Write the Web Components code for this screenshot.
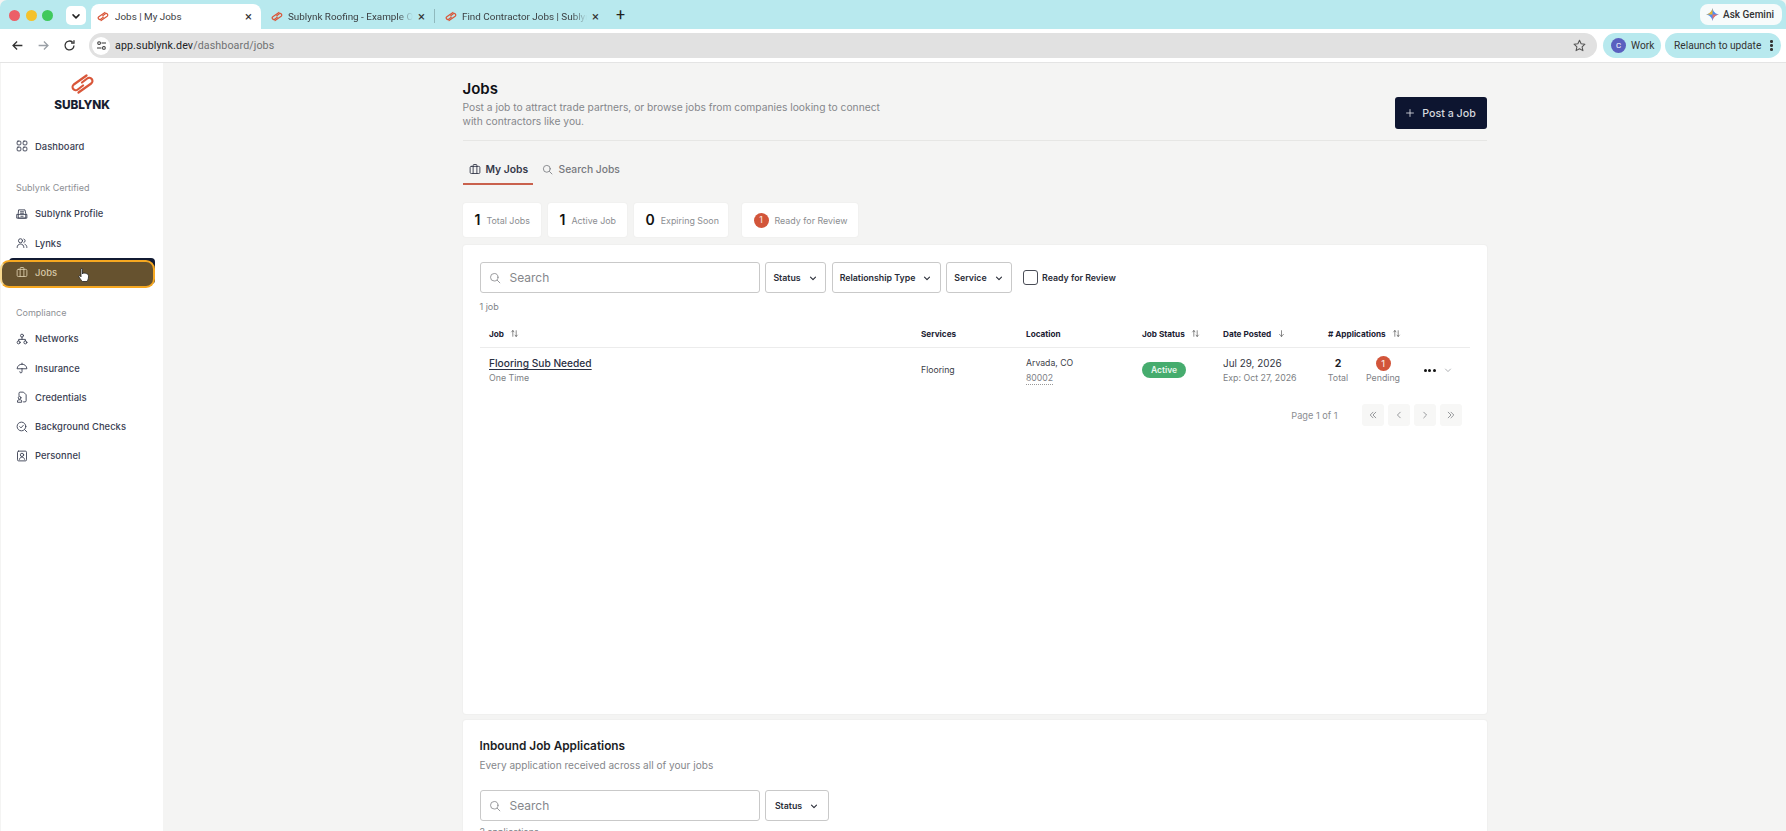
<!DOCTYPE html>
<html lang="en">
<head>
<meta charset="utf-8">
<title>Jobs | My Jobs</title>
<style>
html,body{margin:0;padding:0;height:831px;overflow:hidden;background:#f4f4f3;}
body{font-family:Inter,"Liberation Sans",sans-serif;color:#1c2233;}
</style>
</head>
<body>
<app-shell></app-shell>
<script>
const ICONS={
 grid:'<rect x="1.500" y="1.500" width="5" height="5" rx="1.200"/><rect x="9.500" y="1.500" width="5" height="5" rx="1.200"/><rect x="1.500" y="9.500" width="5" height="5" rx="1.200"/><rect x="9.500" y="9.500" width="5" height="5" rx="1.200"/>',
 store:'<path d="M4 2.500h8l1 5v6H3v-6z"/><path d="M1.500 8.500h13v5h-13z"/><path d="M6 5h4M6 7h4M6.500 11h3"/>',
 users:'<circle cx="6" cy="5" r="2.700"/><path d="M1.500 14c0-3 2-4.600 4.500-4.600s4.500 1.600 4.500 4.600"/><path d="M10.500 2.700a2.500 2.500 0 0 1 0 4.700M12 9.800c1.600.6 2.500 2 2.500 4.200"/>',
 case:'<rect x="1.500" y="4.500" width="13" height="9.500" rx="1.500"/><path d="M5.500 4.500V3a1 1 0 0 1 1-1h3a1 1 0 0 1 1 1v1.500M5.500 4.500V14M10.500 4.500V14"/>',
 net:'<circle cx="8" cy="3.500" r="2"/><circle cx="3.500" cy="12.500" r="2"/><circle cx="12.500" cy="12.500" r="2"/><path d="M8 5.500v3M3.500 10.500V8.500h9v2"/>',
 umb:'<path d="M1.500 8.500C2 5 4.500 3 8 3s6 2 6.500 5.500z"/><path d="M8 1.500V3M8 8.500V13a1.500 1.500 0 0 1-3 0"/>',
 cred:'<path d="M4 6V3a1.500 1.500 0 0 1 1.500-1.500H10l3.500 3.500v8a1.500 1.500 0 0 1-1.500 1.500h-2"/><circle cx="4.800" cy="9" r="1.800"/><path d="M2 14.500v-1.500a2 2 0 0 1 2-1.300h1.600a2 2 0 0 1 2 1.300v1.500z"/>',
 bg:'<circle cx="7.300" cy="7.300" r="5.800"/><path d="M11.500 11.500l3 3M5 7.500l1.700 1.700 3-3.400"/>',
 pers:'<rect x="2" y="1.500" width="12" height="13" rx="1.500"/><circle cx="8" cy="6.500" r="2.200"/><path d="M4.500 12.500c.4-2 1.800-3 3.500-3s3.100 1 3.500 3"/>',
 search:'<circle cx="7" cy="7" r="5"/><path d="M11 11l3.500 3.500"/>',
 chev:'<path d="M4 6.500l4 4 4-4"/>',
 sort:'<path d="M5 13V3M5 3L2.800 5.200M5 3l2.200 2.200M11 3v10M11 13l-2.200-2.200M11 13l2.200-2.200"/>',
 down:'<path d="M8 3v10M8 13l-3.500-3.500M8 13l3.500-3.500"/>',
 first:'<path d="M8 3.500L3.500 8 8 12.500M12.500 3.500L8 8l4.500 4.500"/>',
 prev:'<path d="M10 3.500L5.500 8l4.500 4.500"/>',
 next:'<path d="M6 3.500L10.500 8 6 12.500"/>',
 last:'<path d="M3.500 3.500L8 8l-4.500 4.500M8 3.500L12.500 8 8 12.500"/>',
 plus:'<path d="M8 2.500v11M2.500 8h11"/>'
};
class BaseEl extends HTMLElement{
 render(html){ if(!this.shadowRoot) this.attachShadow({mode:'open'}); this.shadowRoot.innerHTML=html; }
}
class UiIcon extends BaseEl{
 connectedCallback(){
  const n=this.getAttribute('name'),s=this.getAttribute('size')||12,w=this.getAttribute('stroke')||1.3;
  this.render(`<style>:host{display:inline-flex;flex:none;width:${s}px;height:${s}px;color:inherit}svg{display:block;width:100%;height:100%;fill:none;stroke:currentColor;stroke-width:${w};stroke-linecap:round;stroke-linejoin:round}</style><svg viewBox="0 0 16 16" aria-hidden="true">${ICONS[n]||''}</svg>`);
 }
}
customElements.define('ui-icon',UiIcon);

const LOGO=(w,h,sw=2.2)=>`<svg width="${w}" height="${h}" viewBox="0 0 25 20" fill="none" stroke="#d9573a" stroke-width="${sw}" stroke-linecap="round" stroke-linejoin="round" aria-hidden="true"><path d="M16.500 1.500L3.800 10.500a3.200 3.200 0 0 0 4 5L13 11.500"/><path d="M8.500 18.500L21.200 9.500a3.200 3.200 0 0 0-4-5L12 8.500"/></svg>`;
customElements.define('tab-logo',class extends BaseEl{connectedCallback(){this.render(`<style>:host{display:inline-flex;flex:none}</style>${LOGO(12,11,2.6)}`)}});

customElements.define('browser-tab',class extends BaseEl{connectedCallback(){
 const active=this.hasAttribute('active');
 this.render(`<style>
 :host{display:flex;align-items:center;box-sizing:border-box;width:${active?170:173}px;height:25px;padding:0 ${active?9:9}px 0 ${active?6:10}px;gap:${active?6:5}px;font:9.900px "Roboto","Liberation Sans",sans-serif;color:#3c4043;${active?'background:#fff;border-radius:8px 8px 0 0;':''}flex:none;}
 .t{flex:1;min-width:0;white-space:nowrap;overflow:hidden;${active?'':'-webkit-mask-image:linear-gradient(90deg,#000 88%,transparent);mask-image:linear-gradient(90deg,#000 88%,transparent)'}}
 .x{font-size:13px;color:#333;line-height:1;flex:none}
 </style><tab-logo></tab-logo><span class="t"><slot></slot></span><span class="x">×</span>`);
}});

customElements.define('browser-chrome',class extends BaseEl{connectedCallback(){
 this.render(`<style>
 :host{display:block;flex:none;font-family:Roboto,"Liberation Sans",sans-serif;color:#3c4043}
 .strip{height:29px;background:#b8e9ee;display:flex;align-items:flex-end;box-sizing:border-box;padding-left:9px;border-radius:7px 7px 0 0}
 .lights{display:flex;gap:5.500px;align-self:flex-start;margin-top:9.500px}
 .lights i{display:block;width:11px;height:11px;border-radius:50%}
 .drop{width:20px;height:19px;background:#fff;border-radius:5px;align-self:flex-start;margin:6px 5px 0 13px;display:flex;align-items:center;justify-content:center;color:#222}
 .sep{width:1px;height:14px;background:#8fb9bd;margin:0 0 6px 0}
 .add{margin:0 0 5px 8px;font-size:16px;color:#222;line-height:18px;width:14px}
 .sp{flex:1}
 .gem{display:flex;align-items:center;gap:4px;height:21px;background:#f7fbfb;border-radius:8px;padding:0 6px;margin:0 4px 4px 0;align-self:flex-end;font-size:10px;font-weight:500;color:#333;box-sizing:border-box;width:82px;white-space:nowrap}
 .bar{background:#fff;display:flex;align-items:center;border-bottom:1px solid #e4e4e4;box-sizing:content-box;height:33px}
 .nav{width:26px;display:flex;justify-content:center;color:#333;flex:none}
 .nav.off{color:#9aa0a6}
 .nav:first-child{margin-left:4px}
 .url{flex:1;height:25px;margin-left:7px;background:#e1e1e1;border-radius:13px;display:flex;align-items:center;padding-left:3px;padding-right:11px;font-size:10.700px;letter-spacing:.1px;color:#202124}
 .site{width:18px;height:18px;border-radius:50%;background:#fff;display:flex;align-items:center;justify-content:center;margin-right:5px}
 .url b{font-weight:400}.url span{color:#6f7173}
 .star{margin-left:auto;color:#555}
 .pill{height:25px;border-radius:13px;background:#b8e9ee;display:flex;align-items:center;font-size:10.200px;color:#333;box-sizing:border-box;white-space:nowrap}
 .work{width:58px;margin-left:6px;padding-left:8px;gap:5px}
 .av{width:15px;height:15px;border-radius:50%;background:#5a5fbf;color:#fff;font-size:8px;display:flex;align-items:center;justify-content:center}
 .rel{width:116px;margin:0 5px 0 4px;padding-left:9px;gap:9px}
 .dots{display:flex;flex-direction:column;gap:1.500px}.dots i{display:block;width:2.500px;height:2.500px;border-radius:50%;background:#333}
 </style>
 <div class="strip">
  <div class="lights"><i style="background:#ec5f67"></i><i style="background:#f4c22c"></i><i style="background:#3fc95c"></i></div>
  <div class="drop"><ui-icon name="chev" size="12" stroke="2"></ui-icon></div>
  <browser-tab active>Jobs | My Jobs</browser-tab>
  <browser-tab>Sublynk Roofing - Example O</browser-tab>
  <div class="sep"></div>
  <browser-tab>Find Contractor Jobs | Sublyn</browser-tab>
  <div class="add">+</div>
  <div class="sp"></div>
  <div class="gem"><svg width="13" height="13" viewBox="0 0 16 16" aria-hidden="true"><path d="M8 0c.6 4.200 3.800 7.400 8 8-4.200.6-7.400 3.800-8 8-.6-4.200-3.800-7.400-8-8 4.200-.6 7.400-3.800 8-8z" fill="#4e8ef0"/><path d="M8 8H16c-4.200.6-7.400 3.800-8 8z" fill="#e8716a"/><path d="M8 0c-.6 4.200-3.800 7.400-8 8h8z" fill="#f0b429"/></svg>Ask Gemini</div>
 </div>
 <div class="bar">
  <div class="nav"><svg width="13" height="13" viewBox="0 0 16 16" fill="none" stroke="currentColor" stroke-width="1.600" aria-hidden="true"><path d="M14 8H3M7.500 3L2.500 8l5 5"/></svg></div>
  <div class="nav off"><svg width="13" height="13" viewBox="0 0 16 16" fill="none" stroke="currentColor" stroke-width="1.600" aria-hidden="true"><path d="M2 8h11M8.500 3l5 5-5 5"/></svg></div>
  <div class="nav"><svg width="13" height="13" viewBox="0 0 16 16" fill="none" stroke="currentColor" stroke-width="1.600" aria-hidden="true"><path d="M13.500 8A5.500 5.500 0 1 1 11.800 4M13.500 1.500V5H10"/></svg></div>
  <div class="url"><div class="site"><svg width="11" height="11" viewBox="0 0 16 16" fill="none" stroke="#333" stroke-width="1.500" aria-hidden="true"><circle cx="4.500" cy="4.500" r="2"/><path d="M8 4.500h6.500M1.500 11.500H8"/><circle cx="11.500" cy="11.500" r="2"/></svg></div><b>app.sublynk.dev</b><span>/dashboard/jobs</span>
   <svg class="star" width="13" height="13" viewBox="0 0 16 16" fill="none" stroke="currentColor" stroke-width="1.300" stroke-linejoin="round" aria-hidden="true"><path d="M8 1.500l2 4.400 4.700.5-3.500 3.200 1 4.700L8 11.900l-4.200 2.400 1-4.700L1.300 6.400 6 5.900z"/></svg></div>
  <div class="pill work"><span class="av">C</span>Work</div>
  <div class="pill rel">Relaunch to update<span class="dots"><i></i><i></i><i></i></span></div>
 </div>`);
}});

customElements.define('nav-item',class extends BaseEl{connectedCallback(){
 this.render(`<style>
 :host{display:flex;align-items:center;gap:7px;height:29.300px;padding-left:15px;font-size:9.400px;font-weight:500;color:#3a4052;box-sizing:border-box;white-space:nowrap;letter-spacing:.05px;flex:none}
 </style><ui-icon name="${this.getAttribute('icon')}" size="12" stroke="1.200"></ui-icon><slot></slot>`);
}});

customElements.define('side-bar',class extends BaseEl{connectedCallback(){
 this.render(`<style>
 :host{display:flex;flex-direction:column;flex:none;width:162px;margin-left:1px;background:#fff;box-sizing:border-box;padding-top:11px}
 .logo{display:flex;flex-direction:column;align-items:center;flex:none}
 .logo svg{display:block}
 .word{font-size:11.800px;font-weight:800;color:#171d30;letter-spacing:-.1px;line-height:17px;margin-top:2.500px}
 .dash{margin-top:18px}
 .lab{font-size:9px;color:#8d8f94;padding-left:15px;line-height:12px;flex:none}
 .l1{margin-top:21px;margin-bottom:5.400px}
 .l2{margin-top:19.700px;margin-bottom:5.400px}
 .hotwrap{position:relative;height:29.300px;display:flex;align-items:center;flex:none}
 .hotbg{position:absolute;left:8px;top:0;width:146px;height:26px;background:#111a33;border-radius:4px}
 .hot{position:absolute;left:-1px;top:2px;width:155px;height:28px;box-sizing:border-box;background:#66522f;border:2.500px solid #f6a821;border-radius:9px;border-left-color:#f9d98f}
 nav-item.j{position:relative;width:100%;color:#d8c9a8}
 .hand{position:absolute;left:77px;top:10px;width:11px;height:15px}
 </style>
 <div class="logo">${LOGO(25,20)}<div class="word">SUBLYNK</div></div>
 <nav-item class="dash" icon="grid">Dashboard</nav-item>
 <div class="lab l1">Sublynk Certified</div>
 <nav-item icon="store">Sublynk Profile</nav-item>
 <nav-item icon="users">Lynks</nav-item>
 <div class="hotwrap"><div class="hotbg"></div><div class="hot"></div><nav-item class="j" icon="case">Jobs</nav-item>
 <svg class="hand" viewBox="0 0 11 15" aria-hidden="true"><path d="M3 1.200c0-1 1.500-1 1.500 0V6l.3-.8c1.300-.4 3.800.2 4.900 1 .8.600.8 1.500.8 2.700 0 2-.8 3-1.500 4.600H4.300C3.500 12.500 2 10.500 1 9c-.6-1 .6-1.800 1.400-1l.6.800z" fill="#fff" stroke="#222" stroke-width=".8" stroke-linejoin="round"/></svg></div>
 <div class="lab l2">Compliance</div>
 <nav-item icon="net">Networks</nav-item>
 <nav-item icon="umb">Insurance</nav-item>
 <nav-item icon="cred">Credentials</nav-item>
 <nav-item icon="bg">Background Checks</nav-item>
 <nav-item icon="pers">Personnel</nav-item>`);
}});

customElements.define('page-head',class extends BaseEl{connectedCallback(){
 this.render(`<style>
 :host{display:flex;justify-content:space-between;border-bottom:1px solid #e6e6e4;box-sizing:border-box;height:68px;flex:none}
 h1{margin:0;font-size:15px;font-weight:600;color:#0d0f14;line-height:19px;margin-top:5.500px}
 p{margin:2.250px 0 0;font-size:10.250px;line-height:14.500px;color:#85878b;width:440px}
 button{all:unset;box-sizing:border-box;display:flex;align-items:center;justify-content:center;gap:7px;width:92px;height:32px;margin-top:24px;background:#0d1530;color:#d6d8de;font:500 10.700px Inter,"Liberation Sans",sans-serif;border-radius:3px}
 </style><div><h1>Jobs</h1><p>Post a job to attract trade partners, or browse jobs from companies looking to connect with contractors like you.</p></div><button><ui-icon name="plus" size="10" stroke="1.400"></ui-icon>Post a Job</button>`);
}});

customElements.define('page-tabs',class extends BaseEl{connectedCallback(){
 this.render(`<style>
 :host{display:flex;height:44px;box-sizing:border-box;flex:none}
 .t{display:flex;align-items:center;gap:5px;height:100%;box-sizing:border-box;font-size:10.300px;padding-top:14px}
 .on{width:70px;padding-left:6px;border-bottom:2px solid #c9614d;font-weight:600;color:#34394a}
 .off{margin-left:9px;color:#77797e;font-weight:500;gap:6px;padding-bottom:2px}
 </style><div class="t on"><ui-icon name="case" size="12" stroke="1.200"></ui-icon>My Jobs</div><div class="t off"><ui-icon name="search" size="11" stroke="1.200"></ui-icon>Search Jobs</div>`);
}});

customElements.define('stat-card',class extends BaseEl{connectedCallback(){
 this.render(`<style>
 :host{display:flex;align-items:center;box-sizing:border-box;height:34px;background:#fff;border-radius:3px;box-shadow:0 0 2px rgba(0,0,0,.06);padding-left:12px;gap:6px;font-size:8.900px;color:#8b8d91;white-space:nowrap;flex:none}
 b{font-size:14px;font-weight:600;color:#111;line-height:1}
 .n{width:15px;height:15px;border-radius:50%;background:#d2553a;color:#f6e3dd;font-size:8.500px;font-weight:500;display:flex;align-items:center;justify-content:center}
 </style>${this.hasAttribute('badge')?`<span class="n">${this.getAttribute('n')}</span>`:`<b>${this.getAttribute('n')}</b>`}<slot></slot>`);
}});

customElements.define('filter-select',class extends BaseEl{connectedCallback(){
 this.render(`<style>
 :host{display:flex;align-items:center;justify-content:center;gap:7px;height:31px;box-sizing:border-box;background:#fff;border:1px solid #c9c9c9;border-radius:3px;font-size:8.800px;font-weight:600;color:#2a2d38;white-space:nowrap;flex:none}
 </style><slot></slot><ui-icon name="chev" size="10" stroke="1.800"></ui-icon>`);
}});

customElements.define('search-box',class extends BaseEl{connectedCallback(){
 this.render(`<style>
 :host{display:flex;align-items:center;gap:9px;width:280px;height:31px;box-sizing:border-box;padding-left:8px;background:#fff;border:1px solid #c9c9c9;border-radius:3px;font-size:12px;color:#85878b;flex:none}
 </style><ui-icon name="search" size="12" stroke="1.100"></ui-icon>Search`);
}});

customElements.define('jobs-table',class extends BaseEl{connectedCallback(){
 this.render(`<style>
 :host{display:block;font-size:9.500px;margin-top:7px}
 .grid{display:grid;grid-template-columns:432px 105px 116px 81px 105px 141px;padding-left:9.500px}
 .head{height:27px;align-items:center;border-bottom:1px solid #ececec;font-size:8.200px;font-weight:700;color:#1c2233}
 .head>div{display:flex;align-items:center;gap:6px}
 .head ui-icon{color:#555}
 .row{height:44px;align-items:center}
 .ti{font-size:10.200px;font-weight:500;color:#2a3042;text-decoration:underline;text-underline-offset:2px;line-height:14px}
 .sub{font-size:8.800px;color:#7d7f84;line-height:13px;margin-top:1px}
 .svc{font-size:8.700px;color:#3c4048}
 .loc{font-size:8.700px;color:#3c4048;line-height:14px}
 .zip{display:inline-block;color:#808287;border-bottom:1px dotted #999;line-height:11px;margin-top:3px}
 .pill{display:inline-flex;align-items:center;justify-content:center;width:44px;height:16px;border-radius:8px;background:#46ac6e;color:#eaf6ee;font-size:8.500px;font-weight:600}
 .date{font-size:9.900px;color:#33363f;line-height:14px}
 .apps{display:flex;align-items:center}
 .ap{width:45px;text-align:center;flex:none}
 .ap:first-child{margin-left:-12.500px}
 .ap b{display:block;font-size:10.500px;font-weight:700;color:#1a1c24;line-height:15px}
 .ap span{display:block;font-size:8.800px;color:#808287;line-height:13px}
 .bd{width:15px;height:15px;border-radius:50%;background:#d2553a;color:#f6e3dd;font-size:9px;font-weight:500;display:flex;align-items:center;justify-content:center;margin:0 auto}
 .more{display:flex;gap:1.500px;margin-left:18px}.more i{display:block;width:3px;height:3px;border-radius:50%;background:#111}
 .ch{color:#8b8d91;margin-left:7px}
 .pager{display:flex;align-items:center;justify-content:flex-end;gap:4px;padding-right:8px;margin-top:12px;color:#8b8d91;font-size:9.200px}
 .pager span{margin-right:20px}
 .pb{width:22px;height:22px;border-radius:3px;background:#f7f7f6;display:flex;align-items:center;justify-content:center;color:#77797e}
 </style>
 <div class="grid head"><div>Job<ui-icon name="sort" size="9" stroke="1.200"></ui-icon></div><div>Services</div><div>Location</div><div>Job Status<ui-icon name="sort" size="9" stroke="1.200"></ui-icon></div><div>Date Posted<ui-icon name="down" size="9" stroke="1.200"></ui-icon></div><div># Applications<ui-icon name="sort" size="9" stroke="1.200"></ui-icon></div></div>
 <div class="grid row">
  <div><div class="ti">Flooring Sub Needed</div><div class="sub">One Time</div></div>
  <div class="svc">Flooring</div>
  <div class="loc">Arvada, CO<br><span class="zip">80002</span></div>
  <div><span class="pill">Active</span></div>
  <div><div class="date">Jul 29, 2026</div><div class="sub">Exp: Oct 27, 2026</div></div>
  <div class="apps"><div class="ap"><b>2</b><span>Total</span></div><div class="ap"><div class="bd">1</div><span>Pending</span></div><div class="more"><i></i><i></i><i></i></div><ui-icon class="ch" name="chev" size="10" stroke="1.100"></ui-icon></div>
 </div>
 <div class="pager"><span>Page 1 of 1</span><div class="pb"><ui-icon name="first" size="10" stroke="1.200"></ui-icon></div><div class="pb"><ui-icon name="prev" size="10" stroke="1.200"></ui-icon></div><div class="pb"><ui-icon name="next" size="10" stroke="1.200"></ui-icon></div><div class="pb"><ui-icon name="last" size="10" stroke="1.200"></ui-icon></div></div>`);
}});

customElements.define('ui-card',class extends BaseEl{connectedCallback(){
 const h=this.getAttribute('h');
 this.render(`<style>:host{display:block;box-sizing:border-box;${h?`height:${h}px;`:''}background:#fff;border-radius:3px;box-shadow:0 0 2px rgba(0,0,0,.07);padding:${this.getAttribute('pad')||'17px'} 17px 0 17px;flex:none}</style><slot></slot>`);
}});

customElements.define('jobs-page',class extends BaseEl{connectedCallback(){
 this.render(`<style>
 :host{display:flex;flex-direction:column;width:1024px;margin-left:299.500px;padding-top:10px;flex:none;font-family:Inter,"Liberation Sans",sans-serif}
 .stats{display:flex;gap:7px;margin-top:18px;flex:none}
 .vs{width:0;flex:none}
 .filters{display:flex;gap:5.500px;align-items:center}
 .cb{width:15px;height:15px;border:1px solid #4a4d57;border-radius:3px;background:#fff;box-sizing:border-box;margin-left:5px;flex:none}
 .rfr{font-size:8.800px;font-weight:600;color:#2a2d38;margin-left:-1px}
 .count{font-size:9px;color:#808287;line-height:12px;margin-top:8px}
 .cards{display:flex;flex-direction:column;gap:6px;margin-top:8px;flex:none}
 h2{margin:0;font-size:11.800px;font-weight:600;color:#1c1e26;line-height:16px}
 .d{font-size:10.100px;color:#85878b;line-height:14px;margin-top:4px}
 .f2{margin-top:18px}
 .c2{margin-top:5px}
 </style>
 <page-head></page-head>
 <page-tabs></page-tabs>
 <div class="stats">
  <stat-card n="1" style="width:78px">Total Jobs</stat-card>
  <stat-card n="1" style="width:79px">Active Job</stat-card>
  <stat-card n="0" style="width:94px">Expiring Soon</stat-card>
  <div class="vs"></div>
  <stat-card n="1" badge style="width:116px">Ready for Review</stat-card>
 </div>
 <div class="cards">
  <ui-card h="469">
   <div class="filters">
    <search-box></search-box>
    <filter-select style="width:61px">Status</filter-select>
    <filter-select style="width:109px">Relationship Type</filter-select>
    <filter-select style="width:66px">Service</filter-select>
    <span class="cb"></span><span class="rfr">Ready for Review</span>
   </div>
   <div class="count">1 job</div>
   <jobs-table></jobs-table>
  </ui-card>
  <ui-card pad="18px">
   <h2>Inbound Job Applications</h2>
   <div class="d">Every application received across all of your jobs</div>
   <div class="filters f2"><search-box></search-box><filter-select style="width:64px">Status</filter-select></div>
   <div class="count c2">2 applications</div>
  </ui-card>
 </div>`);
}});

customElements.define('app-shell',class extends BaseEl{connectedCallback(){
 this.render(`<style>
 :host{display:flex;flex-direction:column;width:1786px;height:831px;overflow:hidden;background:#f4f4f3}
 .body{display:flex;flex:1;min-height:0;overflow:hidden}
 </style><browser-chrome></browser-chrome><div class="body"><side-bar></side-bar><jobs-page></jobs-page></div>`);
}});
</script>
</body>
</html>
